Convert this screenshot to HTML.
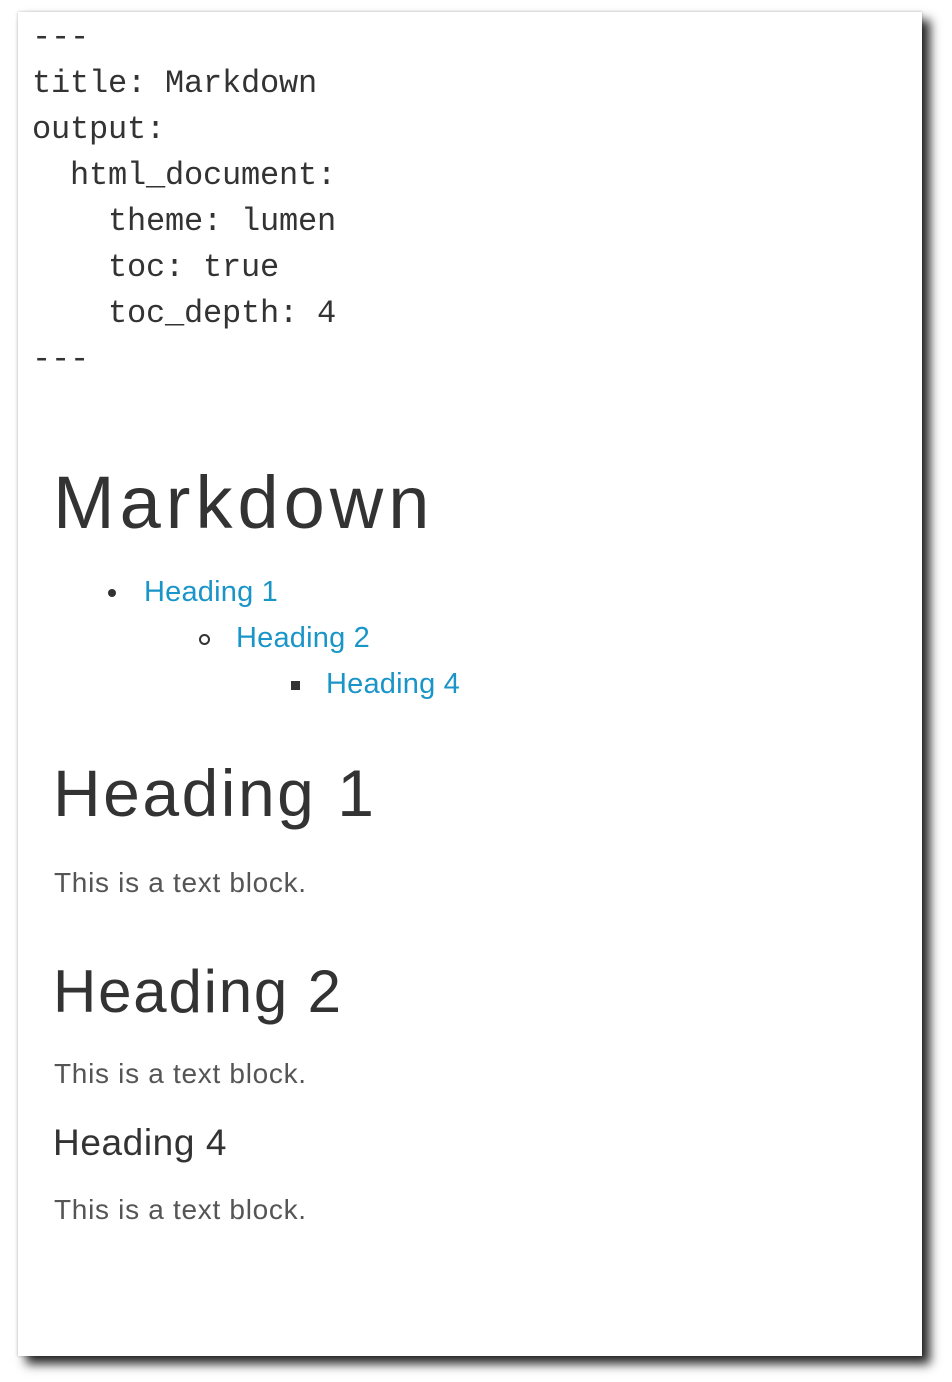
<!DOCTYPE html>
<html><head><style>
html,body{margin:0;padding:0;background:#fff;width:952px;height:1382px;overflow:hidden}
.card{position:absolute;left:18px;top:12px;width:904px;height:1344px;background:#fff;box-shadow:8px 8px 10px rgba(0,0,0,.85),0 0 3px rgba(0,0,0,.25)}
pre{position:absolute;left:14px;top:3px;margin:0;font:32px/46px "Liberation Mono",monospace;color:#333;letter-spacing:-0.2px}
.s{position:absolute;font-family:"Liberation Sans",sans-serif;color:#333;white-space:nowrap}
a{color:#1a95c8;text-decoration:none}
.b{color:#555;font-size:28px;letter-spacing:0.7px}
</style></head><body>
<div class="card">
<pre>---
title: Markdown
output:
  html_document:
    theme: lumen
    toc: true
    toc_depth: 4
---</pre>
<div class="s" style="left:35px;top:448px;font-size:74px;letter-spacing:5px">Markdown</div>
<div class="s" style="left:90px;top:564px;font-size:29px;letter-spacing:0.2px"><span style="display:inline-block;width:8px;height:8px;border-radius:50%;background:#333;vertical-align:middle;margin-right:28px"></span><a>Heading 1</a></div>
<div class="s" style="left:181px;top:610px;font-size:29px;letter-spacing:0.2px"><span style="display:inline-block;width:7px;height:7px;border-radius:50%;border:2px solid #333;vertical-align:middle;margin-right:26px"></span><a>Heading 2</a></div>
<div class="s" style="left:273px;top:656px;font-size:29px;letter-spacing:0.2px"><span style="display:inline-block;width:9px;height:9px;background:#333;vertical-align:middle;margin-right:26px"></span><a>Heading 4</a></div>
<div class="s" style="left:35px;top:743px;font-size:66px;letter-spacing:2.5px">Heading 1</div>
<div class="s b" style="left:36px;top:855px">This is a text block.</div>
<div class="s" style="left:35px;top:945px;font-size:60px;letter-spacing:1.8px">Heading 2</div>
<div class="s b" style="left:36px;top:1046px">This is a text block.</div>
<div class="s" style="left:35px;top:1110px;font-size:37px;letter-spacing:0.6px">Heading 4</div>
<div class="s b" style="left:36px;top:1182px">This is a text block.</div>
</div>
</body></html>
